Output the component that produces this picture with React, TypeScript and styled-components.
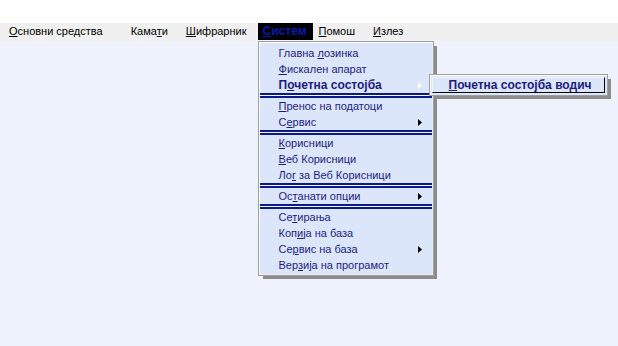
import { type FC, type ReactNode } from "react";
import styled, { createGlobalStyle } from "styled-components";

const GlobalStyle = createGlobalStyle`
  html, body {
    margin: 0;
    padding: 0;
    background: #ffffff;
  }
  body {
    font-family: "Liberation Sans", Arial, sans-serif;
    font-size: 11px;
  }
`;

interface IItem {
  label: ReactNode;
  bold?: boolean;
  arrow?: boolean;
  sepAfter?: boolean;
}

const items: IItem[] = [
  { label: <>Главна <u>л</u>озинка</> },
  { label: <><u>Ф</u>искален апарат</> },
  { label: <>П<u>о</u>четна состојба</>, bold: true, arrow: true, sepAfter: true },
  { label: <><u>П</u>ренос на податоци</> },
  { label: <>С<u>е</u>рвис</>, arrow: true, sepAfter: true },
  { label: <><u>К</u>орисници</> },
  { label: <><u>В</u>еб Корисници</> },
  { label: <>Ло<u>г</u> за Веб Корисници</>, sepAfter: true },
  { label: <>Ос<u>т</u>анати опции</>, arrow: true, sepAfter: true },
  { label: <>Се<u>т</u>ирања</> },
  { label: <>Коп<u>и</u>ја на база</> },
  { label: <>Се<u>р</u>вис на база</>, arrow: true },
  { label: <>Вер<u>з</u>ија на програмот</> },
];

const Arrow: FC<{ light?: boolean }> = ({ light }) => (
  <svg width="4" height="7" viewBox="0 0 4 7">
    <path d="M0 0 L4 3.5 L0 7 Z" fill={light ? "#ffffff" : "#000000"} />
  </svg>
);

const App: FC = () => {
  return (
    <>
      <GlobalStyle />
      <Page>
        <TopBand />
        <MenuBar>
          <Title $ml={4}><u>О</u>сновни средства</Title>
          <Title $ml={20}>Кама<u>т</u>и</Title>
          <Title $ml={10}><u>Ш</u>ифрарник</Title>
          <Title $ml={7} $active>
            <u>С</u>истем
            <Dropdown>
              {items.map((it, i) => (
                <div key={i}>
                  <Row $bold={it.bold}>
                    <span>{it.label}</span>
                    {it.arrow && <Arrow light={it.bold} />}
                    {it.bold && (
                      <Submenu>
                        <SubRow>
                          <u>П</u>очетна состојба водич
                        </SubRow>
                      </Submenu>
                    )}
                  </Row>
                  {it.sepAfter && <Separator />}
                </div>
              ))}
            </Dropdown>
          </Title>
          <Title $ml={2}><u>П</u>омош</Title>
          <Title $ml={10}><u>И</u>злез</Title>
        </MenuBar>
        <Desk />
      </Page>
    </>
  );
};

export default App;

const Page = styled.div`
  width: 618px;
  height: 346px;
  display: flex;
  flex-direction: column;
  overflow: hidden;
`;

const TopBand = styled.div`
  height: 23px;
  background: #ffffff;
`;

const MenuBar = styled.div`
  height: 18px;
  background: #f0f0f0;
  display: flex;
  align-items: flex-start;
  padding-left: 1px;
`;

const Title = styled.div<{ $ml: number; $active?: boolean }>`
  position: relative;
  margin-left: ${(p) => p.$ml}px;
  padding: 0 ${(p) => (p.$active ? 5 : 4)}px;
  width: ${(p) => (p.$active ? "45px" : "auto")};
  height: 17px;
  line-height: 17px;
  color: ${(p) => (p.$active ? "#0a1aa8" : "#000000")};
  background: ${(p) => (p.$active ? "#000000" : "transparent")};
  font-weight: ${(p) => (p.$active ? 700 : 400)};
  font-size: ${(p) => (p.$active ? "12px" : "11px")};
  white-space: nowrap;
`;

const Dropdown = styled.div`
  position: absolute;
  top: 18px;
  left: 0;
  width: 170px;
  padding: 3px 2px 2px 2px;
  background: #dce6fb;
  border: 1px solid #a0a0a0;
  box-shadow: inset 1px 1px 0 #ffffff, inset -1px -1px 0 #ececec,
    4px 4px 0 -1px #8c8c8c;
  font-weight: 400;
  font-size: 11px;
  line-height: normal;
  z-index: 2;
`;

const Row = styled.div<{ $bold?: boolean }>`
  position: relative;
  height: 16px;
  line-height: 16px;
  padding: 0 9px 0 18px;
  display: flex;
  align-items: center;
  justify-content: space-between;
  color: #1c1c7c;
  font-weight: ${(p) => (p.$bold ? 700 : 400)};
  font-size: ${(p) => (p.$bold ? "12px" : "11px")};
`;

const Separator = styled.div`
  height: 1px;
  margin: 0 -1px;
  border-top: 2px solid #0c1a86;
  border-bottom: 2px solid #0c1a86;
  background: #f4f6fc;
`;

const Submenu = styled.div`
  position: absolute;
  left: 168px;
  top: -3px;
  width: 173px;
  padding: 2px;
  background: #dce6fb;
  border: 1px solid #a0a0a0;
  box-shadow: inset 1px 1px 0 #ffffff, 4px 4px 0 -1px #8c8c8c;
  z-index: 3;
`;

const SubRow = styled.div`
  height: 14px;
  line-height: 14px;
  padding-left: 16px;
  color: #1c1c7c;
  font-weight: 700;
  font-size: 12px;
  border: 1px solid #000000;
  border-left-color: #f4f4f4;
  border-top-color: #f4f4f4;
`;

const Desk = styled.div`
  flex: 1;
  background: #edf2fc;
`;
